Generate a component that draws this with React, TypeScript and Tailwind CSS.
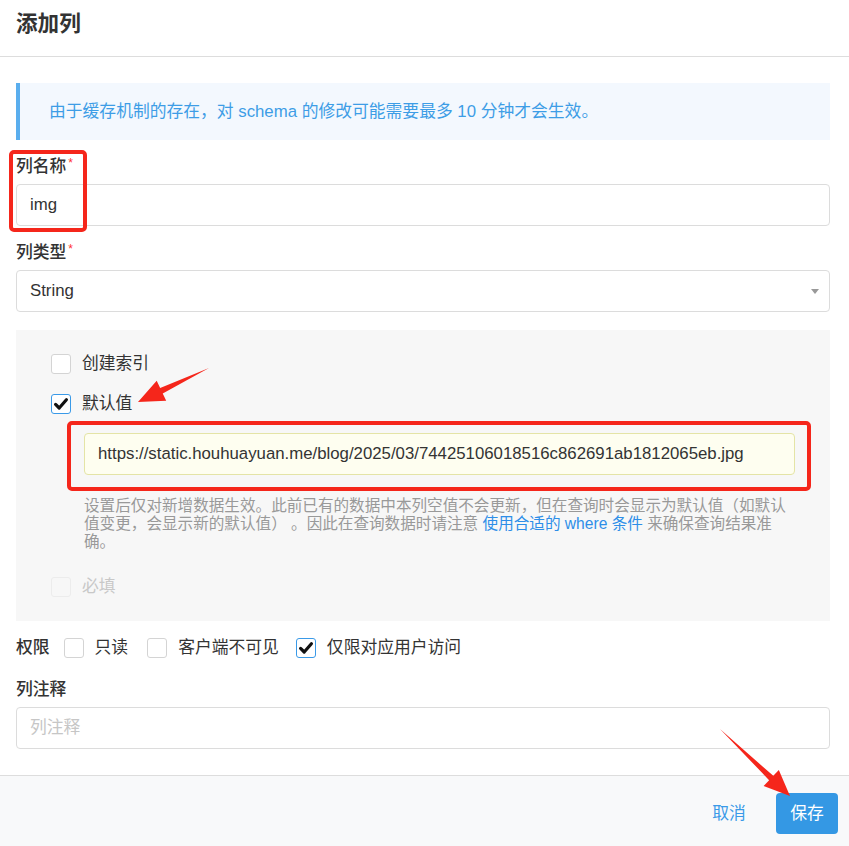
import React from 'react';

const font = "font-[family-name:'Liberation_Sans','Noto_Sans_CJK_SC',sans-serif]";

const Check = ({ checked = false, disabled = false }: { checked?: boolean; disabled?: boolean }) => (
  <span
    className={`w-[20px] h-[20px] rounded-[3px] border flex items-center justify-center shrink-0 ${
      checked ? 'border-[#3a9ae8] bg-white' : disabled ? 'border-[#ececec] bg-[#f7f7f7]' : 'border-[#d4d4d4] bg-white'
    }`}
  >
    {checked && (
      <svg width="16" height="16" viewBox="0 0 16 16">
        <path d="M2.6 8.4 L6.2 12 L13.4 3.8" fill="none" stroke="#111" strokeWidth="3.2" strokeLinecap="round" strokeLinejoin="round" />
      </svg>
    )}
  </span>
);

const Label = ({ text, required = false }: { text: string; required?: boolean }) => (
  <div className="text-[16.8px] leading-[20px] font-medium text-[#333] mb-[7px] flex">
    {text}
    {required && <span className="text-[#f33] text-[12px] leading-[12px] ml-[2px]">*</span>}
  </div>
);

// red annotation arrow, tail -> tip
const Arrow = ({ x1, y1, x2, y2 }: { x1: number; y1: number; x2: number; y2: number }) => {
  const dx = x2 - x1;
  const dy = y2 - y1;
  const len = Math.sqrt(dx * dx + dy * dy);
  const ux = dx / len;
  const uy = dy / len;
  const nx = -uy;
  const ny = ux;
  const headL = 26;
  const bx = x2 - ux * headL;
  const by = y2 - uy * headL;
  const pts = [
    [x1, y1],
    [bx + nx * 3, by + ny * 3],
    [bx + nx * 11, by + ny * 11],
    [x2, y2],
    [bx - nx * 11, by - ny * 11],
    [bx - nx * 3, by - ny * 3],
  ]
    .map((p) => p.join(','))
    .join(' ');
  return <polygon points={pts} fill="#f5261b" />;
};

export default function App() {
  return (
    <div className={`relative w-[849px] h-[846px] bg-white overflow-hidden flex flex-col ${font}`}>
      <div className="h-[57px] border-b border-[#dddddd] px-4 pt-[10px] shrink-0">
        <h1 className="text-[21.6px] leading-[28px] font-bold text-[#333]">添加列</h1>
      </div>

      <div className="px-4 pt-[26px] pr-[19px]">
        <div className="h-[57px] border-l-[4px] border-[#5aaeee] bg-[#f3f8fe] pl-[29px] flex items-center text-[16.8px] text-[#3d9de6]">
          由于缓存机制的存在，对 schema 的修改可能需要最多 10 分钟才会生效。
        </div>

        <div className="mt-[17px]">
          <Label text="列名称" required />
          <div className="h-[42px] border border-[#dcdcdc] rounded-[4px] px-[13px] flex items-center text-[16.8px] text-[#333]">
            img
          </div>
        </div>

        <div className="mt-[17px]">
          <Label text="列类型" required />
          <div className="h-[42px] border border-[#dcdcdc] rounded-[4px] px-[13px] flex items-center justify-between text-[16.8px] text-[#333]">
            String
            <svg width="8" height="5" viewBox="0 0 8 5" className="mr-[-3px]">
              <path d="M0 0 L8 0 L4 5 Z" fill="#999" />
            </svg>
          </div>
        </div>

        <div className="mt-[18px] h-[291px] bg-[#f7f7f7] pt-[24px] pl-[35px]">
          <div className="flex items-center h-[20px]">
            <Check />
            <span className="ml-[11px] text-[16.8px] text-[#333]">创建索引</span>
          </div>
          <div className="flex items-center h-[20px] mt-[20px]">
            <Check checked />
            <span className="ml-[11px] text-[16.8px] text-[#333]">默认值</span>
          </div>
          <div className="ml-[33px] mt-[19px] w-[711px] h-[42px] bg-[#fefef0] border border-[#e4e4a6] rounded-[4px] px-[13px] flex items-center text-[16.8px] text-[#333]">
            https://static.houhuayuan.me/blog/2025/03/74425106018516c862691ab1812065eb.jpg
          </div>
          <p className="ml-[33px] mt-[22px] w-[711px] text-[15.6px] leading-[18px] text-[#999]">
            设置后仅对新增数据生效。此前已有的数据中本列空值不会更新，但在查询时会显示为默认值（如默认值变更，会显示新的默认值） 。因此在查询数据时请注意{' '}
            <span className="text-[#2d8ee8]">使用合适的 where 条件</span> 来确保查询结果准
            <br />
            确。
          </p>
          <div className="flex items-center h-[20px] mt-[26px]">
            <Check disabled />
            <span className="ml-[11px] text-[16.8px] text-[#c8c8c8]">必填</span>
          </div>
        </div>

        <div className="mt-[17px] flex items-center h-[20px] text-[16.8px] text-[#333]">
          <span className="font-medium mr-[14px]">权限</span>
          <Check />
          <span className="ml-[11px] mr-[19px]">只读</span>
          <Check />
          <span className="ml-[11px] mr-[17px]">客户端不可见</span>
          <Check checked />
          <span className="ml-[11px]">仅限对应用户访问</span>
        </div>

        <div className="mt-[22px]">
          <Label text="列注释" />
          <div className="h-[42px] border border-[#dcdcdc] rounded-[4px] px-[13px] flex items-center text-[16.8px] text-[#c6c6c6]">
            列注释
          </div>
        </div>
      </div>

      <div className="mt-auto h-[71px] border-t border-[#dddddd] bg-[#f8f9fa] flex justify-end items-start pt-[17px] pr-[11px] gap-[16px]">
        <button className="w-[62px] h-[41px] rounded-[4px] text-[16.8px] text-[#3a9ae8]">取消</button>
        <button className="w-[62px] h-[41px] rounded-[4px] text-[16.8px] text-white bg-[#3498e4]">保存</button>
      </div>

      {/* annotations */}
      <div className="absolute left-[9px] top-[150px] w-[78px] h-[82px] border-[4px] border-[#f5261b] rounded-[5px]" />
      <div className="absolute left-[67px] top-[421px] w-[744px] h-[70px] border-[4px] border-[#f5261b] rounded-[5px]" />
      <svg className="absolute left-0 top-0" width="849" height="846">
        <Arrow x1={209} y1={368} x2={138} y2={402} />
        <Arrow x1={720} y1={729} x2={790} y2={796} />
      </svg>
    </div>
  );
}
